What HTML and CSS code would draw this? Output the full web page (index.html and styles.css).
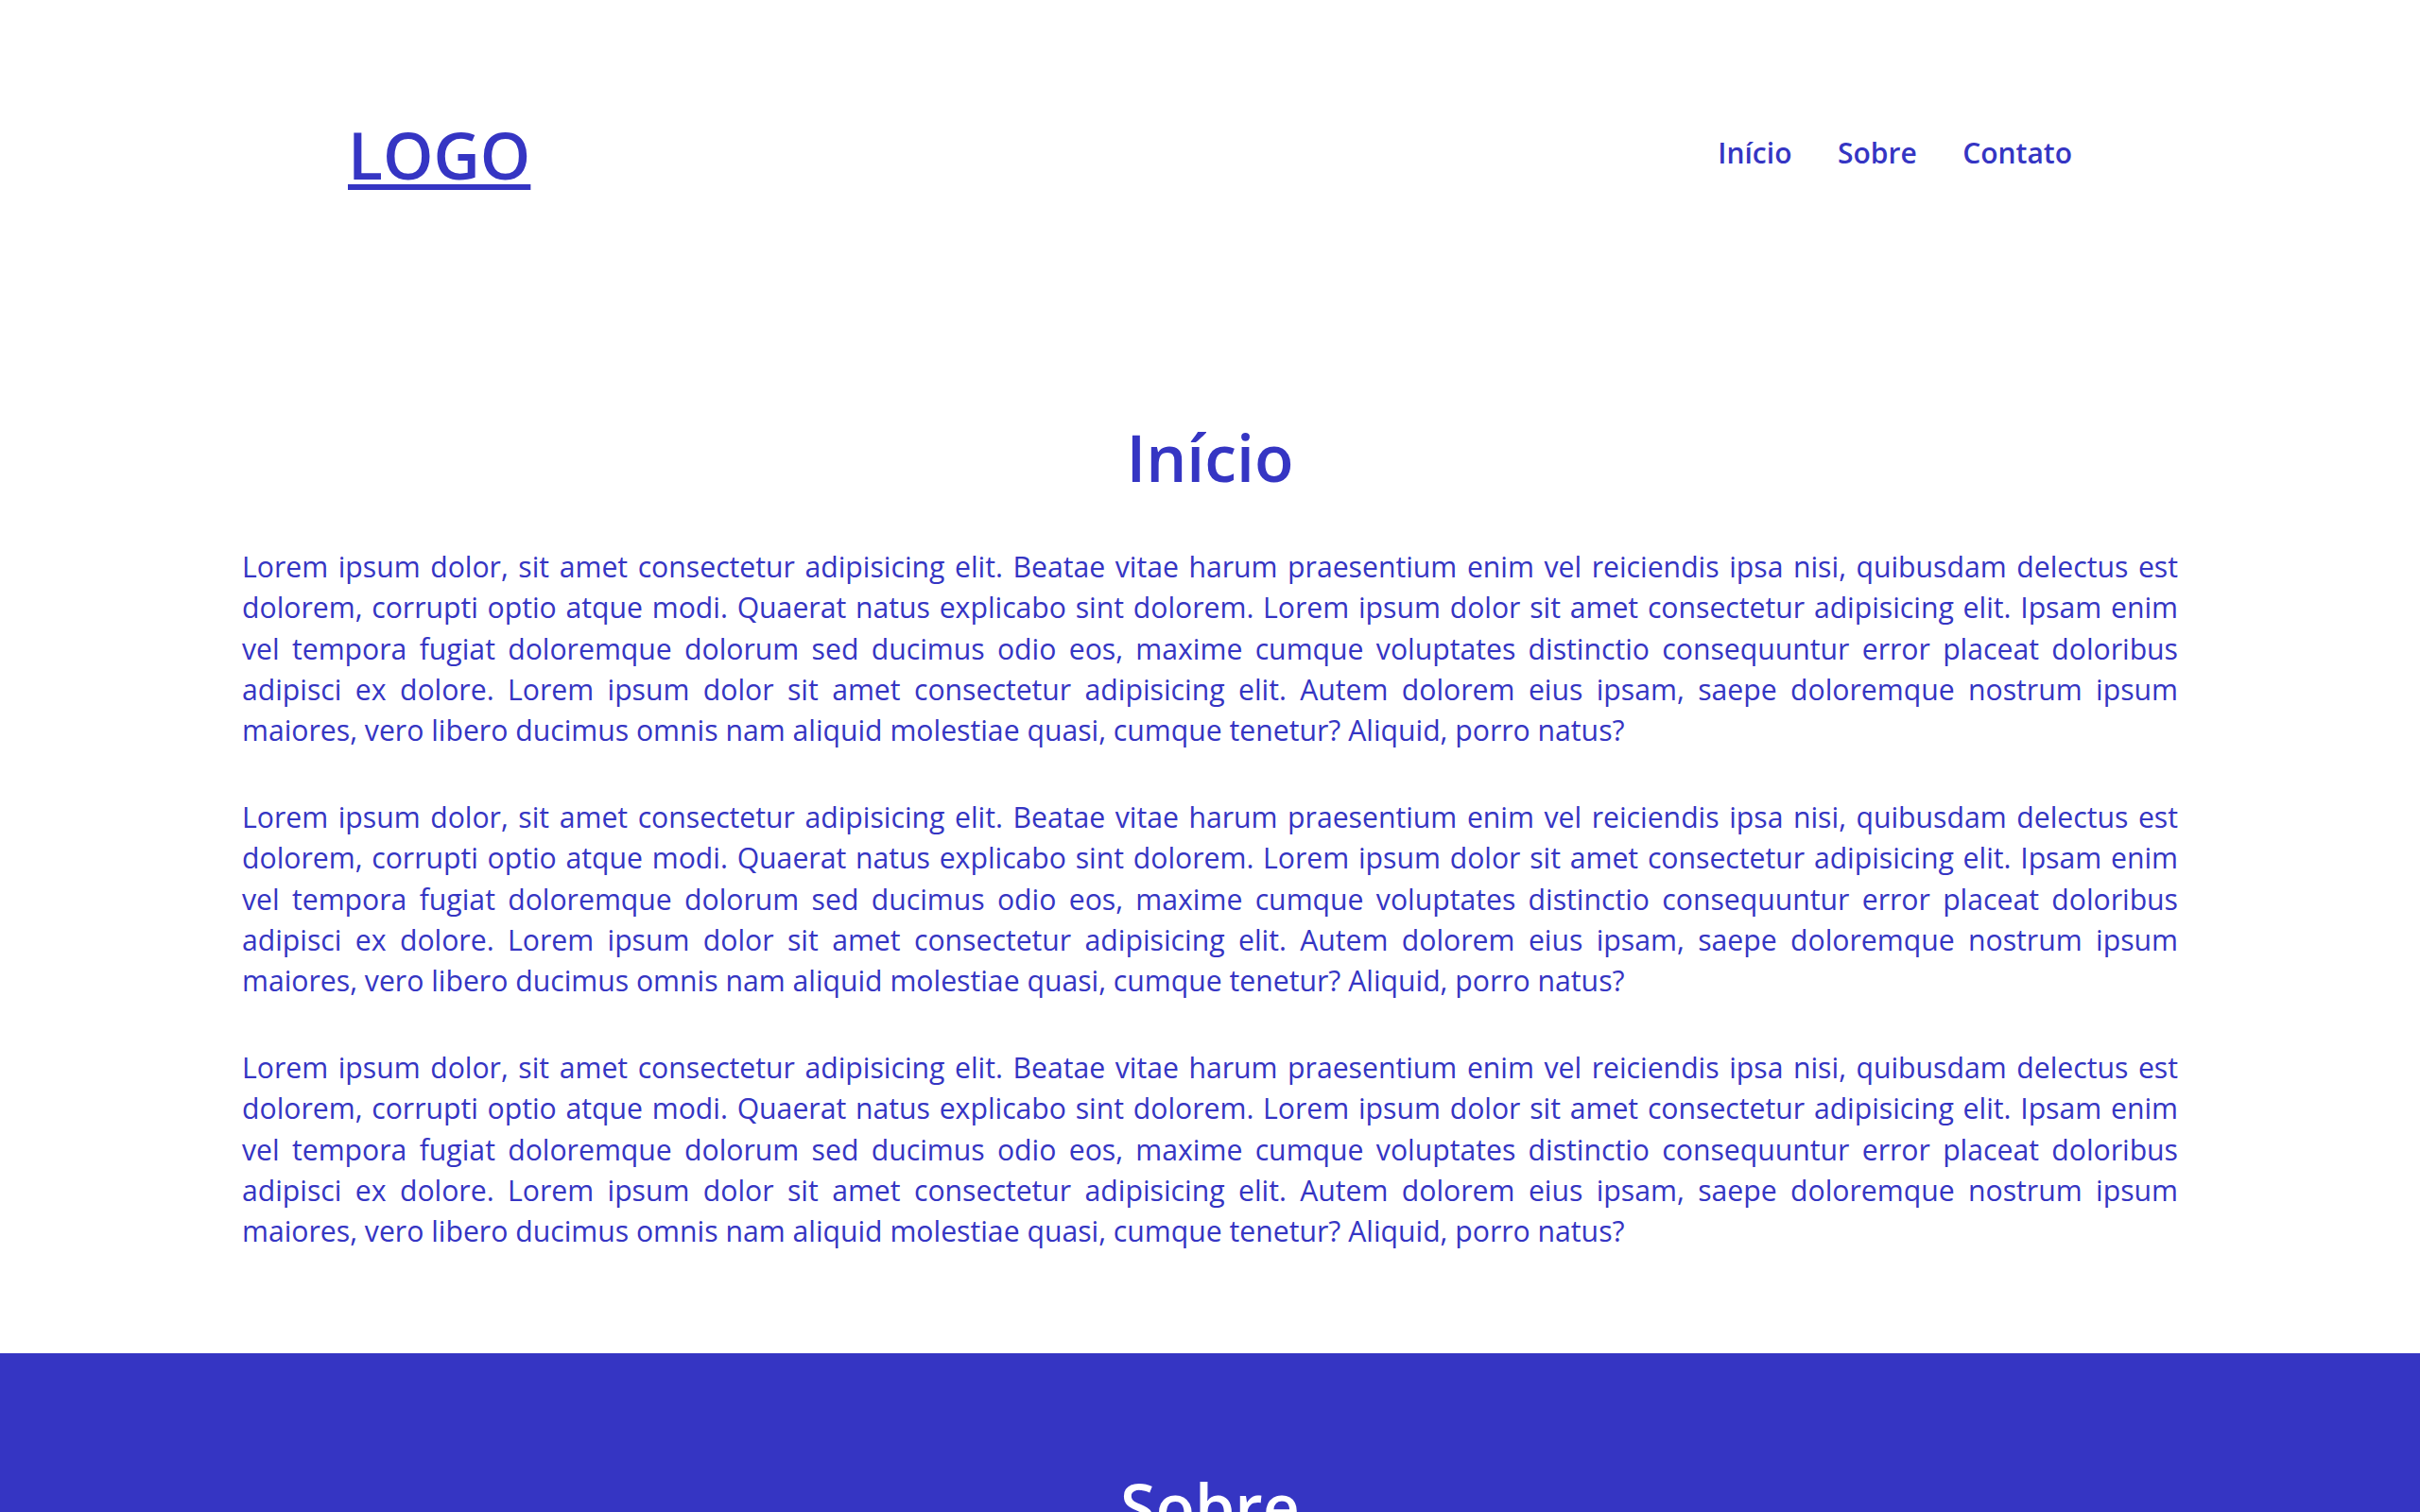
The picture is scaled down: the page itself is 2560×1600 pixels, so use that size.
FILE: index.html
```html
<!DOCTYPE html>
<html lang="pt-BR">
<head>
<meta charset="utf-8">
<title>Início</title>
<link rel="stylesheet" href="styles.css">
</head>
<body>
<header class="site-header">
  <a class="logo" href="#">LOGO</a>
  <nav class="nav">
    <a href="#inicio">Início</a>
    <a href="#sobre">Sobre</a>
    <a href="#contato">Contato</a>
  </nav>
</header>
<main>
  <section class="section section-home" id="inicio">
    <h1 class="section-title">Início</h1>
    <p class="section-text">Lorem ipsum dolor, sit amet consectetur adipisicing elit. Beatae vitae harum praesentium enim vel reiciendis ipsa nisi, quibusdam delectus est dolorem, corrupti optio atque modi. Quaerat natus explicabo sint dolorem. Lorem ipsum dolor sit amet consectetur adipisicing elit. Ipsam enim vel tempora fugiat doloremque dolorum sed ducimus odio eos, maxime cumque voluptates distinctio consequuntur error placeat doloribus adipisci ex dolore. Lorem ipsum dolor sit amet consectetur adipisicing elit. Autem dolorem eius ipsam, saepe doloremque nostrum ipsum maiores, vero libero ducimus omnis nam aliquid molestiae quasi, cumque tenetur? Aliquid, porro natus?</p>
    <p class="section-text">Lorem ipsum dolor, sit amet consectetur adipisicing elit. Beatae vitae harum praesentium enim vel reiciendis ipsa nisi, quibusdam delectus est dolorem, corrupti optio atque modi. Quaerat natus explicabo sint dolorem. Lorem ipsum dolor sit amet consectetur adipisicing elit. Ipsam enim vel tempora fugiat doloremque dolorum sed ducimus odio eos, maxime cumque voluptates distinctio consequuntur error placeat doloribus adipisci ex dolore. Lorem ipsum dolor sit amet consectetur adipisicing elit. Autem dolorem eius ipsam, saepe doloremque nostrum ipsum maiores, vero libero ducimus omnis nam aliquid molestiae quasi, cumque tenetur? Aliquid, porro natus?</p>
    <p class="section-text">Lorem ipsum dolor, sit amet consectetur adipisicing elit. Beatae vitae harum praesentium enim vel reiciendis ipsa nisi, quibusdam delectus est dolorem, corrupti optio atque modi. Quaerat natus explicabo sint dolorem. Lorem ipsum dolor sit amet consectetur adipisicing elit. Ipsam enim vel tempora fugiat doloremque dolorum sed ducimus odio eos, maxime cumque voluptates distinctio consequuntur error placeat doloribus adipisci ex dolore. Lorem ipsum dolor sit amet consectetur adipisicing elit. Autem dolorem eius ipsam, saepe doloremque nostrum ipsum maiores, vero libero ducimus omnis nam aliquid molestiae quasi, cumque tenetur? Aliquid, porro natus?</p>
  </section>
  <section class="section section-about" id="sobre">
    <h2 class="section-title">Sobre</h2>
    <p class="section-text">Lorem ipsum dolor, sit amet consectetur adipisicing elit. Beatae vitae harum praesentium enim vel reiciendis ipsa nisi, quibusdam delectus est dolorem, corrupti optio atque modi. Quaerat natus explicabo sint dolorem.</p>
  </section>
</main>
</body>
</html>
```
FILE: styles.css
```css
* { box-sizing: border-box; }

html, body {
  margin: 0;
  padding: 0;
  background: #ffffff;
}

body {
  font-family: "Open Sans", "Noto Sans", sans-serif;
  color: #3535c3;
}

a { color: inherit; }

.site-header {
  width: 2048px;
  margin: 0 auto;
  padding: 130px 112px 0;
  display: flex;
  justify-content: space-between;
  align-items: center;
}

.logo {
  font-size: 68px;
  line-height: 1;
  font-weight: 600;
  text-decoration: underline;
  text-decoration-thickness: 6px;
  text-underline-offset: 5px;
}

.nav {
  display: flex;
  gap: 48.5px;
  margin-top: -4px;
}

.nav a {
  font-size: 30px;
  line-height: 1;
  font-weight: 600;
  text-decoration: none;
}

.section {
  width: 100%;
}

.section-home {
  padding: 252px 0 108px;
}

.section-title {
  margin: 0;
  text-align: center;
  font-size: 68px;
  line-height: 1;
  font-weight: 600;
}

.section-text {
  width: 2048px;
  margin: 0 auto;
  font-size: 30.2px;
  line-height: 43.3px;
  text-align: justify;
}

.section-home .section-title {
  margin-bottom: 60px;
}

.section-home .section-text + .section-text {
  margin-top: 48.5px;
}

.section-about {
  background: #3535c3;
  color: #ffffff;
  padding: 128px 0 128px;
}

.section-about .section-title {
  margin-bottom: 60px;
}
```
